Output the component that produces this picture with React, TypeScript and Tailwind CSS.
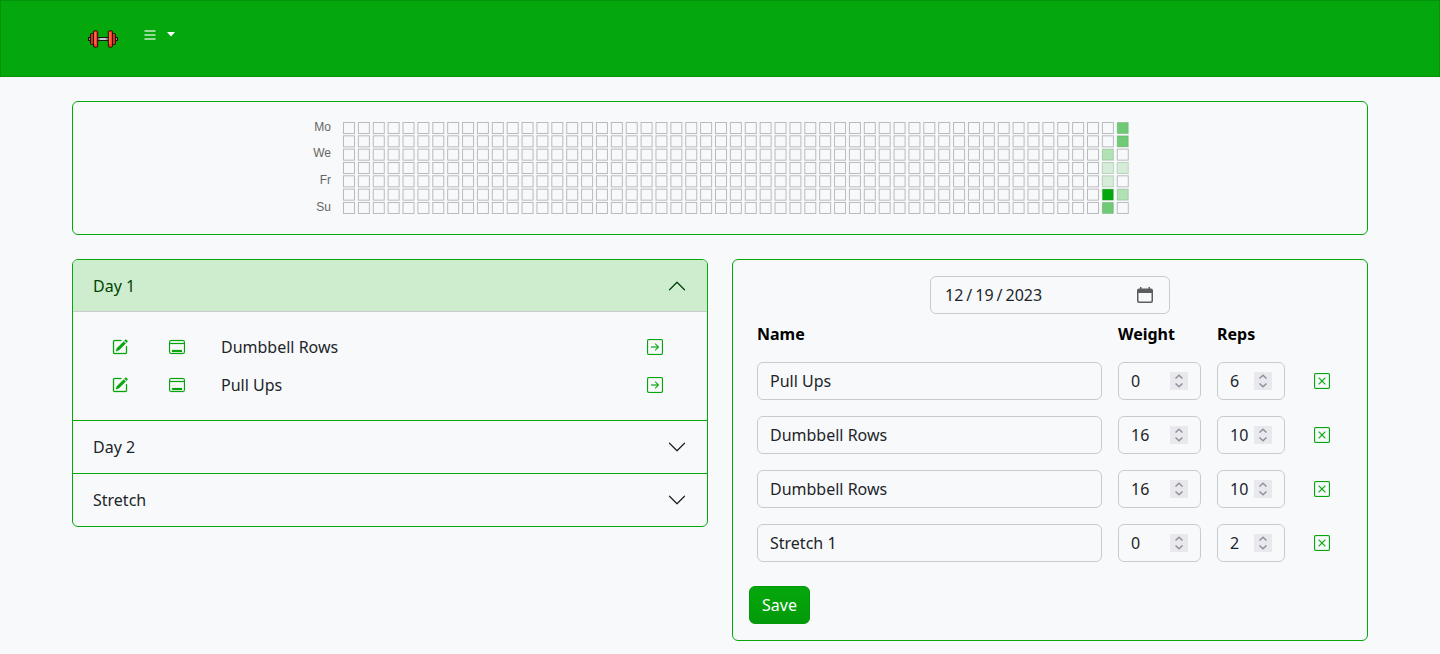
import { BsArrowRightSquare, BsList, BsPencilSquare, BsWindowDesktop, BsXSquare } from 'react-icons/bs'

const COLUMNS = 53
const levels: Record<string, string> = {
  '51-2': '#b2e1b6',
  '51-3': '#d5ecd9',
  '51-4': '#d5ecd9',
  '51-5': '#04a80b',
  '51-6': '#6eca74',
  '52-0': '#6eca74',
  '52-1': '#6eca74',
  '52-3': '#d5ecd9',
  '52-5': '#b2e1b6',
}

const dayLabels = [
  { text: 'Mo', y: 13 },
  { text: 'We', y: 39 },
  { text: 'Fr', y: 66 },
  { text: 'Su', y: 93 },
]

const exercises = ['Dumbbell Rows', 'Pull Ups']

const entries = [
  { name: 'Pull Ups', weight: 0, reps: 6 },
  { name: 'Dumbbell Rows', weight: 16, reps: 10 },
  { name: 'Dumbbell Rows', weight: 16, reps: 10 },
  { name: 'Stretch 1', weight: 0, reps: 2 },
]

function Dumbbell() {
  return (
    <svg width="30" height="18" viewBox="0 0 30 18" aria-hidden="true">
      <g stroke="#201208" strokeWidth="1">
        <rect x="0.5" y="7.500" width="29" height="3" fill="#8c9196" />
        <rect x="2.500" y="3.500" width="3" height="11" rx="0.8" fill="#dc2d14" />
        <rect x="24.500" y="3.500" width="3" height="11" rx="0.8" fill="#dc2d14" />
        <rect x="5.500" y="0.8" width="4.200" height="16.400" rx="1.200" fill="#fb3a1c" />
        <rect x="20.300" y="0.8" width="4.200" height="16.400" rx="1.200" fill="#fb3a1c" />
      </g>
      <rect x="12" y="8" width="6" height="2" fill="#c3c8cd" />
      <rect x="6.500" y="2" width="1.200" height="12" fill="#ff7d5e" />
      <rect x="21.300" y="2" width="1.200" height="12" fill="#ff7d5e" />
    </svg>
  )
}

function Heatmap() {
  return (
    <svg width="820" height="100" viewBox="0 0 820 100" role="img" aria-label="Workout activity">
      {dayLabels.map((d) => (
        <text
          key={d.text}
          x="21"
          y={d.y}
          textAnchor="end"
          fontSize="12"
          fill="#666666"
          className="font-['Liberation_Sans',sans-serif]"
        >
          {d.text}
        </text>
      ))}
      {Array.from({ length: COLUMNS * 7 }, (_, i) => {
        const col = Math.floor(i / 7)
        const row = i % 7
        return (
          <rect
            key={i}
            x={33.5 + col * 14.88}
            y={4.5 + row * 13.33}
            width="11"
            height="11"
            fill={levels[`${col}-${row}`] ?? 'none'}
            stroke={levels[`${col}-${row}`] ? '#3c783c' : '#000000'}
            strokeOpacity="0.25"
          />
        )
      })}
    </svg>
  )
}

function Chevron({ up = false }: { up?: boolean }) {
  return (
    <svg width="20" height="20" viewBox="0 0 16 16" fill="currentColor" aria-hidden="true">
      {up ? (
        <path d="M14.354 11.354a.5.5 0 0 1-.708 0L8 5.707l-5.646 5.647a.5.5 0 0 1-.708-.708l6-6a.5.5 0 0 1 .708 0l6 6a.5.5 0 0 1 0 .708z" />
      ) : (
        <path d="M1.646 4.646a.5.5 0 0 1 .708 0L8 10.293l5.646-5.647a.5.5 0 0 1 .708.708l-6 6a.5.5 0 0 1-.708 0l-6-6a.5.5 0 0 1 0-.708z" />
      )}
    </svg>
  )
}

function NumberField({ label, value }: { label: string; value: number }) {
  return (
    <div className="flex h-[38px] items-center rounded-md border border-[#c9cccf] px-3">
      <input
        type="number"
        aria-label={label}
        defaultValue={value}
        className="w-0 min-w-0 flex-1 appearance-none bg-transparent outline-none [-moz-appearance:textfield] [&::-webkit-inner-spin-button]:appearance-none"
      />
      <span className="flex h-[18px] w-[18px] flex-col bg-[#e9e9ed] text-[#8f8f9d]">
        <button type="button" aria-label={`Increase ${label}`} className="flex h-[9px] items-center justify-center">
          <svg width="18" height="9" viewBox="0 0 18 9" fill="none" stroke="currentColor" strokeWidth="1.5">
            <path d="M5.5 6.5 9 3.2l3.5 3.3" />
          </svg>
        </button>
        <button type="button" aria-label={`Decrease ${label}`} className="flex h-[9px] items-center justify-center">
          <svg width="18" height="9" viewBox="0 0 18 9" fill="none" stroke="currentColor" strokeWidth="1.5">
            <path d="M5.5 2.5 9 5.8l3.5-3.3" />
          </svg>
        </button>
      </span>
    </div>
  )
}

function CollapsedItem({ title }: { title: string }) {
  return (
    <h2 className="border-t border-[#04a80b]">
      <button type="button" className="flex h-[52px] w-full items-center justify-between px-5">
        {title}
        <Chevron />
      </button>
    </h2>
  )
}

export default function App() {
  return (
    <div className="min-h-screen bg-[#f8f9fb] pb-3 font-['Noto_Sans',sans-serif] text-base text-[#212529]">
      <nav className="border border-[#04920a] bg-[#04a70c]">
        <div className="mx-auto flex h-[75px] max-w-[1320px] items-center px-7 pb-1">
          <a href="#home" aria-label="Home" className="pt-1">
            <Dumbbell />
          </a>
          <button type="button" aria-label="Menu" className="ml-6 flex items-center gap-2 pb-1 text-white">
            <BsList className="size-4 opacity-90" strokeWidth="0.3" />
            <svg width="10" height="5" viewBox="0 0 10 5" fill="currentColor" aria-hidden="true">
              <path d="M1 0h8L5 4.5z" />
            </svg>
          </button>
        </div>
      </nav>

      <main className="mx-auto flex max-w-[1320px] flex-col gap-6 px-3 pt-6">
        <section className="flex justify-center rounded-md border border-[#04a80b] py-4">
          <Heatmap />
        </section>

        <div className="grid grid-cols-2 items-start gap-6">
          <section className="overflow-hidden rounded-md border border-[#04a80b]">
            <h2>
              <button
                type="button"
                aria-expanded="true"
                className="flex h-[52px] w-full items-center justify-between border-b border-[#c9cccf] bg-[#cdedce] px-5 text-[#024304]"
              >
                Day 1
                <Chevron up />
              </button>
            </h2>
            <ul className="px-5 py-4">
              {exercises.map((name) => (
                <li key={name} className="flex h-[38px] items-center px-5">
                  <button type="button" aria-label={`Edit ${name}`} className="-ml-px text-[#04a80b]">
                    <BsPencilSquare className="size-4" strokeWidth="0.3" />
                  </button>
                  <button type="button" aria-label={`Show ${name}`} className="ml-[41px] text-[#04a80b]">
                    <BsWindowDesktop className="size-4" strokeWidth="0.2" />
                  </button>
                  <span className="ml-9 flex-1">{name}</span>
                  <button type="button" aria-label={`Add ${name}`} className="mr-1 text-[#04a80b]">
                    <BsArrowRightSquare className="size-4" strokeWidth="0.2" />
                  </button>
                </li>
              ))}
            </ul>
            <CollapsedItem title="Day 2" />
            <CollapsedItem title="Stretch" />
          </section>

          <form className="rounded-md border border-[#04a80b] p-4" onSubmit={(e) => e.preventDefault()}>
            <label className="mx-auto flex h-[38px] w-60 items-center justify-between rounded-md border border-[#c9cccf] pr-4 pl-[13px]">
              <input
                type="date"
                aria-label="Workout date"
                defaultValue="2023-12-19"
                className="bg-transparent outline-none [&::-webkit-calendar-picker-indicator]:hidden [&::-webkit-datetime-edit-text]:px-[2px]"
              />
              <svg width="16" height="16" viewBox="0 0 16 16" fill="#5b5e61" aria-hidden="true">
                <path d="M3 0h1.5v1.5h7V0H13v1.5h1A2 2 0 0 1 16 3.500V14a2 2 0 0 1-2 2H2a2 2 0 0 1-2-2V3.500a2 2 0 0 1 2-2h1zM1.500 6v7.500a1 1 0 0 0 1 1h11a1 1 0 0 0 1-1V6z" />
              </svg>
            </label>
            <table className="mb-4 w-full table-fixed">
              <thead>
                <tr className="text-left text-black">
                  <th className="p-2 font-bold">Name</th>
                  <th className="w-[99px] p-2 font-bold">Weight</th>
                  <th className="w-[84px] p-2 font-bold">Reps</th>
                  <th className="w-[58px] p-2" />
                </tr>
              </thead>
              <tbody>
                {entries.map((entry, i) => (
                  <tr key={i}>
                    <td className="p-2">
                      <input
                        type="text"
                        aria-label="Name"
                        defaultValue={entry.name}
                        className="block h-[38px] w-full rounded-md border border-[#c9cccf] bg-transparent px-3 outline-none"
                      />
                    </td>
                    <td className="p-2">
                      <NumberField label="Weight" value={entry.weight} />
                    </td>
                    <td className="p-2">
                      <NumberField label="Reps" value={entry.reps} />
                    </td>
                    <td className="p-2">
                      <button
                        type="button"
                        aria-label={`Remove ${entry.name}`}
                        className="mx-auto block text-[#04a80b]"
                      >
                        <BsXSquare className="size-4" strokeWidth="0.2" />
                      </button>
                    </td>
                  </tr>
                ))}
              </tbody>
            </table>
            <button
              type="submit"
              className="block h-[38px] rounded-md border border-[#04970a] bg-linear-to-b from-[#04a80b] to-[#049a0a] px-3 text-white"
            >
              Save
            </button>
          </form>
        </div>
      </main>
    </div>
  )
}
